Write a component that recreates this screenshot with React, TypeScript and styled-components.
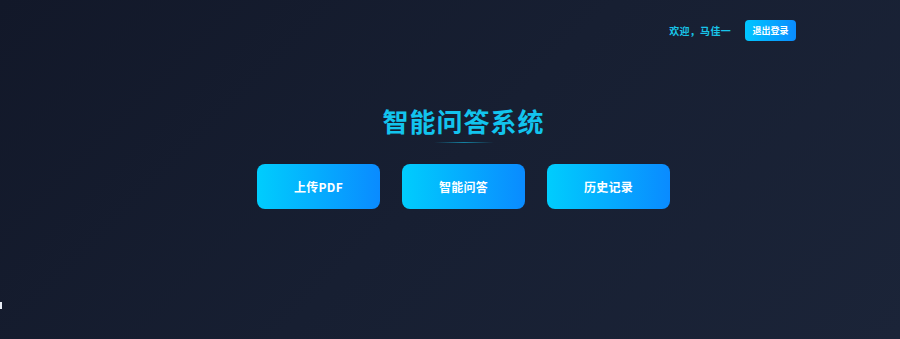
import React from "react";
import styled, { createGlobalStyle } from "styled-components";

const Global = createGlobalStyle`
  html, body { margin: 0; padding: 0; }
  body {
    font-family: "Noto Sans CJK SC", "Noto Sans", sans-serif;
    background: #151c2e;
  }
`;

const Page = styled.div`
  position: relative;
  width: 900px;
  height: 339px;
  overflow: hidden;
  background: linear-gradient(135deg, #121829 0%, #171f32 50%, #1b2438 100%);
  display: flex;
  flex-direction: column;
`;

const Header = styled.header`
  display: flex;
  justify-content: flex-end;
  align-items: center;
  gap: 14px;
  padding: 20px 104px 0 0;
  height: 21px;
`;

const Welcome = styled.span`
  color: #18c6ea;
  font-size: 10px;
  font-weight: 700;
  letter-spacing: 0.3px;
`;

const LogoutButton = styled.button`
  border: none;
  width: 51px;
  height: 21px;
  border-radius: 4px;
  background: linear-gradient(90deg, #00c6ff 0%, #0a8cff 100%);
  color: #fff;
  font-family: inherit;
  font-size: 9px;
  font-weight: 700;
  padding: 0;
  cursor: pointer;
`;

const Main = styled.main`
  display: flex;
  flex-direction: column;
  align-items: center;
  padding: 64px 0 0 27px;
`;

const Title = styled.h1`
  margin: 0;
  color: #12c4ee;
  font-size: 26px;
  font-weight: 700;
  letter-spacing: 1px;
  line-height: 32px;
`;

const Underline = styled.div`
  width: 60px;
  height: 1px;
  margin-top: 5px;
  background: linear-gradient(90deg, rgba(18, 196, 238, 0) 0%, rgba(18, 196, 238, 0.6) 50%, rgba(18, 196, 238, 0) 100%);
`;

const ButtonRow = styled.div`
  display: flex;
  gap: 22px;
  margin-top: 21px;
`;

const ActionButton = styled.button`
  width: 123px;
  height: 45px;
  border: none;
  border-radius: 8px;
  background: linear-gradient(90deg, #00cdfd 0%, #0a8bff 100%);
  color: #fff;
  font-family: inherit;
  font-size: 12px;
  font-weight: 700;
  letter-spacing: 0.3px;
  cursor: pointer;
`;

const EdgeMark = styled.div`
  position: absolute;
  left: 0;
  top: 302px;
  width: 2px;
  height: 7px;
  background: #e8ecf5;
`;

export default function App() {
  return (
    <>
      <Global />
      <Page>
        <Header>
          <Welcome>欢迎，马佳一</Welcome>
          <LogoutButton>退出登录</LogoutButton>
        </Header>
        <Main>
          <Title>智能问答系统</Title>
          <Underline />
          <ButtonRow>
            <ActionButton>上传PDF</ActionButton>
            <ActionButton>智能问答</ActionButton>
            <ActionButton>历史记录</ActionButton>
          </ButtonRow>
        </Main>
        <EdgeMark />
      </Page>
    </>
  );
}
